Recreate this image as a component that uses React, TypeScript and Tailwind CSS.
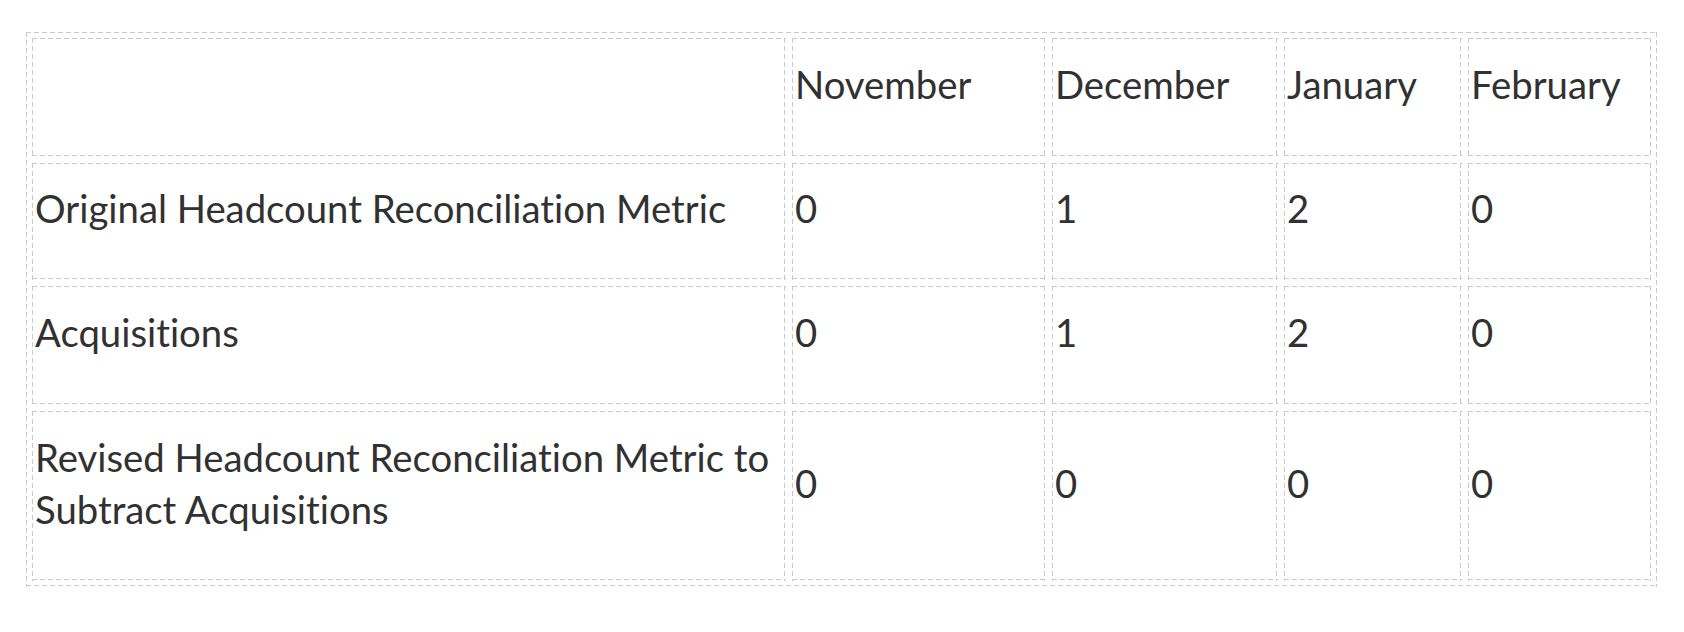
const months = ['November', 'December', 'January', 'February'];

const rows = [
    { label: 'Original Headcount Reconciliation Metric', values: [0, 1, 2, 0], h: 'h-[118px]' },
    { label: 'Acquisitions', values: [0, 1, 2, 0], h: 'h-[120px]' },
    {
        label: 'Revised Headcount Reconciliation Metric to Subtract Acquisitions',
        values: [0, 0, 0, 0],
        h: 'h-[171px]',
    },
];

// dashed 1px frame drawn with gradients so the dashes are long like the screenshot
const dashed =
    'border border-transparent [background:linear-gradient(90deg,#c4c9d2_62%,transparent_0)_left_top/8px_1px_repeat-x,linear-gradient(90deg,#c4c9d2_62%,transparent_0)_left_bottom/8px_1px_repeat-x,linear-gradient(180deg,#c4c9d2_62%,transparent_0)_left_top/1px_8px_repeat-y,linear-gradient(180deg,#c4c9d2_62%,transparent_0)_right_top/1px_8px_repeat-y]';

const cell = `${dashed} pl-[3px] pr-[3px] pt-0 pb-[26px] align-middle text-left font-normal`;

export default function App() {
    return (
        <div className="min-h-screen bg-white pl-[25px] pt-[31px] font-['Lato',sans-serif] text-[38.3px] leading-[52px] text-[#313131] [font-variant-ligatures:none]">
            <table className={`${dashed} w-[1633px] table-fixed border-separate border-spacing-[5px]`}>
                <colgroup>
                    <col className="w-[755px]" />
                    <col className="w-[255px]" />
                    <col className="w-[227px]" />
                    <col className="w-[179px]" />
                    <col className="w-[185px]" />
                </colgroup>
                <thead>
                    <tr>
                        <th className={`${cell} h-[120px]`}></th>
                        {months.map((m) => (
                            <th key={m} className={`${cell} h-[120px]`}>
                                {m}
                            </th>
                        ))}
                    </tr>
                </thead>
                <tbody>
                    {rows.map((row) => (
                        <tr key={row.label}>
                            <td className={`${cell} ${row.h}`}>{row.label}</td>
                            {row.values.map((v, i) => (
                                <td key={i} className={`${cell} ${row.h}`}>
                                    {v}
                                </td>
                            ))}
                        </tr>
                    ))}
                </tbody>
            </table>
        </div>
    );
}
